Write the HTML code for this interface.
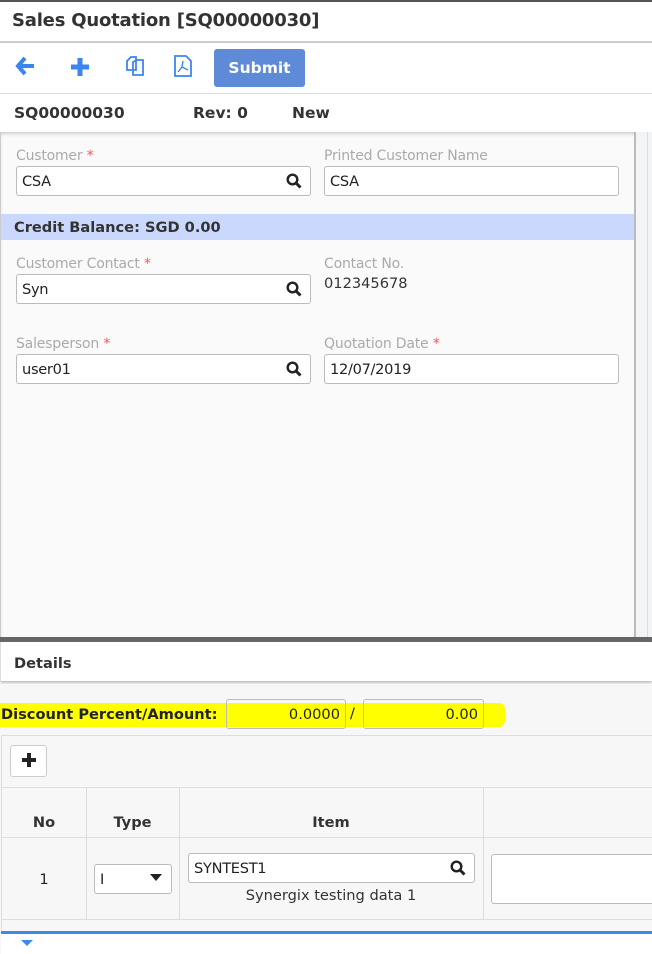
<!DOCTYPE html>
<html><head><style>
*{box-sizing:border-box;margin:0;padding:0}
body{width:652px;height:954px;overflow:hidden;background:#fff;font-family:"DejaVu Sans","Liberation Sans",sans-serif;color:#222;position:relative}
.a{position:absolute}
.lbl{position:absolute;font-size:14px;color:#aaa;letter-spacing:-0.2px}
.lbl b{color:#f55;font-weight:normal}
.inp{position:absolute;height:30px;border:1px solid #bbb;border-radius:3px;background:#fff;font-size:14.6px;padding:6px 5px;letter-spacing:-0.3px;color:#222}
.mag{position:absolute;right:8px;top:6px}
.hd{font-weight:bold;font-size:14.6px;color:#333}
</style></head><body>
<div class="a" style="left:0;top:0;width:652px;height:2px;background:#555"></div>
<div class="a" style="left:12px;top:10px;font-size:18px;font-weight:bold;color:#333;letter-spacing:-0.2px">Sales Quotation [SQ00000030]</div>
<div class="a" style="left:0;top:41px;width:652px;height:2px;background:#ccc"></div>
<svg class="a" style="left:15px;top:56px" width="22" height="20" viewBox="0 0 22 20"><path d="M10 2 L3 10 L10 18 M3 10 H19" stroke="#3a86f0" stroke-width="4" fill="none"/></svg>
<svg class="a" style="left:70px;top:57px" width="20" height="20" viewBox="0 0 20 20"><path d="M10 1V19M1 10H19" stroke="#3a86f0" stroke-width="5"/></svg>
<svg class="a" style="left:123px;top:55px" width="22" height="22" viewBox="0 0 22 22"><path d="M4 6 L8 2 H13 V15 H4 Z M10 7 L14 5 H20 V20 H10 Z" stroke="#3a86f0" stroke-width="1.8" fill="#fff"/></svg>
<svg class="a" style="left:174px;top:55px" width="18" height="22" viewBox="0 0 18 22"><path d="M1 1H12L17 6V21H1Z" stroke="#3a86f0" stroke-width="1.8" fill="#fff"/><path d="M9 6 L8 12 L4 17 M8 12 L14 15" stroke="#3a86f0" stroke-width="1.4" fill="none"/></svg>
<div class="a" style="left:214px;top:49px;width:91px;height:38px;background:#5f8ad8;border-radius:3px;color:#fff;font-weight:bold;font-size:15.5px;text-align:center;line-height:38px">Submit</div>
<div class="a" style="left:0;top:93px;width:652px;height:1px;background:#ddd"></div>
<div class="a hd" style="left:14px;top:104px;font-size:15.5px">SQ00000030</div>
<div class="a hd" style="left:193px;top:104px;font-size:15.5px">Rev: 0</div>
<div class="a hd" style="left:292px;top:104px;font-size:15.5px">New</div>
<div class="a" style="left:0;top:132px;width:635px;height:505px;background:#fafafa;border-left:1px solid #ccc;box-shadow:inset 0 3px 4px -2px #bbb"></div>
<div class="a" style="left:634px;top:132px;width:2px;height:505px;background:#bbb"></div>
<div class="a" style="left:636px;top:132px;width:16px;height:505px;background:#f3f4f6"></div>
<div class="a" style="left:647px;top:132px;width:1px;height:505px;background:#ddd"></div>
<div class="lbl" style="left:16px;top:148px">Customer <b>*</b></div>
<div class="inp" style="left:16px;top:166px;width:295px">CSA<svg class="mag" width="16" height="16" viewBox="0 0 16 16"><circle cx="6.5" cy="6.5" r="4.8" stroke="#222" stroke-width="2.4" fill="none"/><path d="M10 10L14.5 14.5" stroke="#222" stroke-width="3"/></svg></div>
<div class="lbl" style="left:324px;top:148px">Printed Customer Name</div>
<div class="inp" style="left:324px;top:166px;width:295px">CSA</div>
<div class="a" style="left:1px;top:214px;width:633px;height:26px;background:#c9d8fc"></div>
<div class="a hd" style="left:14px;top:219px">Credit Balance: SGD 0.00</div>
<div class="lbl" style="left:16px;top:256px">Customer Contact <b>*</b></div>
<div class="inp" style="left:16px;top:274px;width:295px">Syn<svg class="mag" width="16" height="16" viewBox="0 0 16 16"><circle cx="6.5" cy="6.5" r="4.8" stroke="#222" stroke-width="2.4" fill="none"/><path d="M10 10L14.5 14.5" stroke="#222" stroke-width="3"/></svg></div>
<div class="lbl" style="left:324px;top:256px">Contact No.</div>
<div class="a" style="left:324px;top:275px;font-size:14.6px;color:#333">012345678</div>
<div class="lbl" style="left:16px;top:336px">Salesperson <b>*</b></div>
<div class="inp" style="left:16px;top:354px;width:295px">user01<svg class="mag" width="16" height="16" viewBox="0 0 16 16"><circle cx="6.5" cy="6.5" r="4.8" stroke="#222" stroke-width="2.4" fill="none"/><path d="M10 10L14.5 14.5" stroke="#222" stroke-width="3"/></svg></div>
<div class="lbl" style="left:324px;top:336px">Quotation Date <b>*</b></div>
<div class="inp" style="left:324px;top:354px;width:295px">12/07/2019</div>
<div class="a" style="left:0;top:637px;width:652px;height:5px;background:#666"></div>
<div class="a" style="left:0;top:642px;width:652px;height:39px;background:#fff;box-shadow:0 2px 3px #bbb;border-left:1px solid #ddd"></div>
<div class="a hd" style="left:14px;top:655px">Details</div>
<div class="a" style="left:0;top:684px;width:652px;height:270px;background:#f7f7f7"></div>
<div class="a" style="left:0;top:703px;width:505px;height:24px;background:#ffff00;border-radius:0 6px 6px 0"></div>
<div class="a hd" style="left:1px;top:706px;color:#222">Discount Percent/Amount:</div>
<div class="a" style="left:226px;top:699px;width:120px;height:30px;border:1px solid #bbb;border-radius:3px;font-size:14.6px;text-align:right;padding:6px 5px">0.0000</div>
<div class="a" style="left:350px;top:705px;font-size:14.6px">/</div>
<div class="a" style="left:363px;top:699px;width:121px;height:30px;border:1px solid #bbb;border-radius:3px;font-size:14.6px;text-align:right;padding:6px 5px">0.00</div>
<div class="a" style="left:1px;top:735px;width:651px;height:1px;background:#ddd"></div>
<div class="a" style="left:1px;top:735px;width:1px;height:200px;background:#ddd"></div>
<div class="a" style="left:10px;top:745px;width:37px;height:32px;background:#fff;border:1px solid #ccc;border-radius:3px"></div>
<svg class="a" style="left:21px;top:752px" width="16" height="16" viewBox="0 0 16 16"><path d="M8 1V15M1 8H15" stroke="#222" stroke-width="4"/></svg>
<div class="a" style="left:2px;top:787px;width:650px;height:1px;background:#ddd"></div>
<div class="a" style="left:2px;top:837px;width:650px;height:1px;background:#ddd"></div>
<div class="a" style="left:2px;top:919px;width:650px;height:1px;background:#ddd"></div>
<div class="a" style="left:86px;top:787px;width:1px;height:132px;background:#ddd"></div>
<div class="a" style="left:179px;top:787px;width:1px;height:132px;background:#ddd"></div>
<div class="a" style="left:483px;top:787px;width:1px;height:132px;background:#ddd"></div>
<div class="a hd" style="left:2px;top:814px;width:84px;text-align:center">No</div>
<div class="a hd" style="left:86px;top:814px;width:93px;text-align:center">Type</div>
<div class="a hd" style="left:179px;top:814px;width:304px;text-align:center">Item</div>
<div class="a" style="left:2px;top:871px;width:84px;text-align:center;font-size:14.6px">1</div>
<div class="a" style="left:94px;top:864px;width:78px;height:30px;background:#fff;border:1px solid #bbb;border-radius:3px;font-size:14.6px;padding:6px 5px">I</div>
<svg class="a" style="left:150px;top:874px" width="12" height="8"><path d="M0 0H12L6 7Z" fill="#222"/></svg>
<div class="inp" style="left:188px;top:853px;width:287px">SYNTEST1<svg class="mag" width="16" height="16" viewBox="0 0 16 16"><circle cx="6.5" cy="6.5" r="4.8" stroke="#222" stroke-width="2.4" fill="none"/><path d="M10 10L14.5 14.5" stroke="#222" stroke-width="3"/></svg></div>
<div class="a" style="left:179px;top:887px;width:304px;text-align:center;font-size:14.6px;color:#333">Synergix testing data 1</div>
<div class="a" style="left:491px;top:854px;width:170px;height:50px;background:#fff;border:1px solid #bbb;border-radius:3px"></div>
<div class="a" style="left:1px;top:931px;width:651px;height:23px;background:#fff;border-top:3px solid #3b8beb"></div>
<svg class="a" style="left:21px;top:940px" width="12" height="7"><path d="M0 0H12L6 6Z" fill="#3b8beb"/></svg>
</body></html>
